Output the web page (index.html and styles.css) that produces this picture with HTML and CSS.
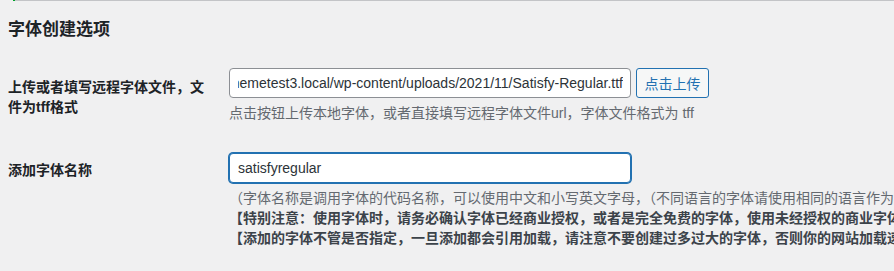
FILE: index.html
```html
<!DOCTYPE html>
<html lang="zh-CN">
<head>
<meta charset="utf-8">
<title>字体创建选项</title>
<link rel="stylesheet" href="styles.css">
</head>
<body>
<div class="notice-edge"></div>
<div class="wrap">
  <h2 class="section-title">字体创建选项</h2>
  <div class="form-table">
    <div class="row row-upload">
      <div class="label">上传或者填写远程字体文件，文件为tff格式</div>
      <div class="field">
        <div class="upload-line">
          <input class="text-input url-input" type="text" value="http://themetest3.local/wp-content/uploads/2021/11/Satisfy-Regular.ttf">
          <button class="button" type="button">点击上传</button>
        </div>
        <p class="description">点击按钮上传本地字体，或者直接填写远程字体文件url，字体文件格式为 tff</p>
      </div>
    </div>
    <div class="row row-name">
      <div class="label">添加字体名称</div>
      <div class="field">
        <input class="text-input name-input is-focused" type="text" value="satisfyregular">
        <div class="notes">
          <p class="note">（字体名称是调用字体的代码名称，可以使用中文和小写英文字母，（不同语言的字体请使用相同的语言作为字体名称））</p>
          <p class="note strong">【特别注意：使用字体时，请务必确认字体已经商业授权，或者是完全免费的字体，使用未经授权的商业字体将可能导致侵权纠纷！】</p>
          <p class="note strong">【添加的字体不管是否指定，一旦添加都会引用加载，请注意不要创建过多过大的字体，否则你的网站加载速度会变慢！】</p>
        </div>
      </div>
    </div>
  </div>
</div>
</body>
</html>
```

FILE: styles.css
```css
html, body {
  margin: 0;
  padding: 0;
  overflow: hidden;
  background: #f0f0f1;
}

body {
  font-family: "Liberation Sans", "Noto Sans CJK SC", sans-serif;
  color: #1d2327;
  font-size: 14px;
}

.notice-edge {
  height: 1px;
  margin-left: 13px;
  background: linear-gradient(to right, #00a32a 0, #00a32a 2px, #c3c4c7 2px);
}

.wrap {
  padding-left: 8px;
}

.section-title {
  margin: 17px 0 0;
  font-size: 17px;
  line-height: 24px;
  font-weight: 700;
  color: #1d2327;
}

.form-table {
  display: flex;
  flex-direction: column;
}

.row {
  display: grid;
  grid-template-columns: 220px 1fr;
}

.row-upload {
  margin-top: 26px;
}

.row-name {
  margin-top: 29px;
}

.label {
  width: 200px;
  font-size: 14px;
  font-weight: 700;
  line-height: 20px;
  color: #1d2327;
}

.row-upload .label {
  padding-top: 9px;
}

.row-name .label {
  padding-top: 8px;
}

.field {
  min-width: 0;
  overflow: hidden;
  padding: 1px 0 0 1px;
  margin-top: -1px;
}

.upload-line {
  display: flex;
  gap: 5px;
  align-items: center;
}

.text-input {
  box-sizing: border-box;
  width: 402px;
  height: 30px;
  margin: 0;
  padding: 0 8px;
  border: 1px solid #8c8f94;
  border-radius: 4px;
  background: #fff;
  color: #2c3338;
  font-family: "Liberation Sans", "Noto Sans CJK SC", sans-serif;
  font-size: 14px;
  outline: none;
}

.url-input {
  direction: rtl;
  padding-right: 7px;
}

.name-input {
  display: block;
  margin: 1px 0 0 0;
}

.is-focused {
  border-color: #2271b1;
  box-shadow: 0 0 0 1px #2271b1;
}

.button {
  box-sizing: border-box;
  width: 73px;
  height: 30px;
  margin: 0;
  padding: 0;
  border: 1px solid #2271b1;
  border-radius: 3px;
  background: #f6f7f7;
  color: #2271b1;
  font-family: "Liberation Sans", "Noto Sans CJK SC", sans-serif;
  font-size: 14px;
  white-space: nowrap;
  cursor: pointer;
}

.description {
  margin: 5px 0 0;
  font-size: 14px;
  line-height: 20px;
  color: #646970;
  white-space: nowrap;
}

.notes {
  margin-top: 5px;
}

.note {
  margin: 0;
  font-size: 14px;
  line-height: 20px;
  color: #646970;
  white-space: nowrap;
}

.note.strong {
  font-weight: 700;
  color: #3c434a;
}
```
